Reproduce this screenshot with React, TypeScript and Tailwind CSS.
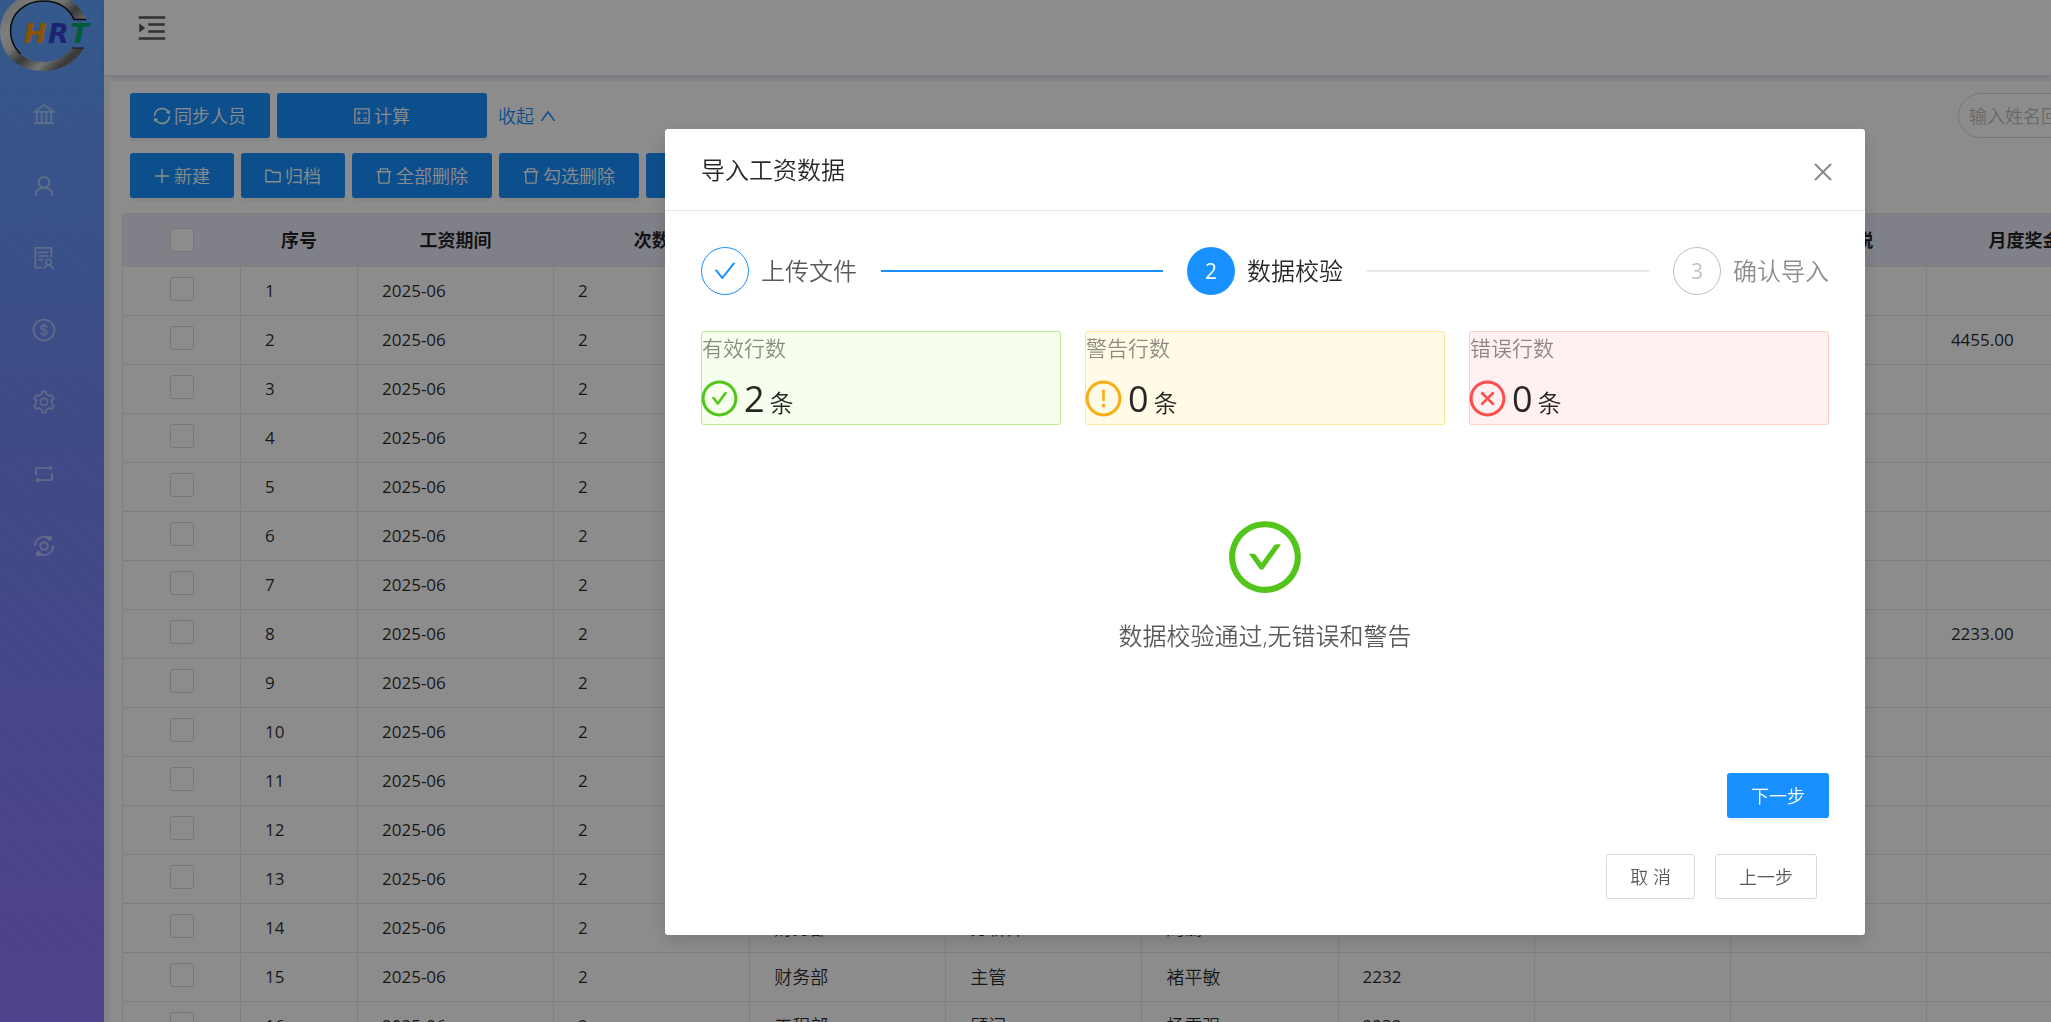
import {
  AiOutlineBank,
  AiOutlineCalculator,
  AiOutlineCheck,
  AiOutlineCheckCircle,
  AiOutlineClose,
  AiOutlineCloseCircle,
  AiOutlineDelete,
  AiOutlineDollar,
  AiOutlineExclamationCircle,
  AiOutlineFolder,
  AiOutlineMenuUnfold,
  AiOutlinePlus,
  AiOutlineRetweet,
  AiOutlineSetting,
  AiOutlineSolution,
  AiOutlineSync,
  AiOutlineUp,
  AiOutlineUser,
} from 'react-icons/ai';
import type { ReactNode } from 'react';

type Row = {
  id: number;
  dept?: string;
  post?: string;
  name?: string;
  code?: string;
  bonus?: string;
};

const details: Record<number, Omit<Row, 'id'>> = {
  2: { bonus: '4455.00' },
  8: { bonus: '2233.00' },
  14: { dept: '财务部', post: '分析师', name: '周丽' },
  15: { dept: '财务部', post: '主管', name: '褚平敏', code: '2232' },
  16: { dept: '工程部', post: '顾问', name: '杨雪强', code: '2232' },
};

const rows: Row[] = Array.from({ length: 16 }, (_, i) => ({ id: i + 1, ...details[i + 1] }));

const headers = ['序号', '工资期间', '次数', '', '', '', '', '', '个人所得税', '月度奖金'];

function OrbitIcon() {
  return (
    <svg viewBox="0 0 24 24" className="w-6 h-6" fill="none" stroke="currentColor" strokeWidth="2">
      <circle cx="12" cy="12" r="3.8" />
      <path d="M2.9 12A9.1 9.1 0 0 1 16 3.8" />
      <path d="M21.1 12A9.1 9.1 0 0 1 8 20.2" />
      <circle cx="17.4" cy="4.6" r="2.4" fill="currentColor" stroke="none" />
      <circle cx="6.6" cy="19.4" r="2.4" fill="currentColor" stroke="none" />
      <path d="M17 2.9h3M7 21.1H4" strokeWidth="1.4" />
    </svg>
  );
}

function Logo() {
  return (
    <svg viewBox="0 0 104 75" className="w-[104px] h-[75px] block">
      <defs>
        <linearGradient id="ring" x1="0" y1="0" x2="1" y2="1">
          <stop offset="0" stopColor="#b5b5b5" />
          <stop offset="0.3" stopColor="#e6e6e6" />
          <stop offset="0.42" stopColor="#d0d0d0" />
          <stop offset="0.55" stopColor="#6a6a6a" />
          <stop offset="0.7" stopColor="#d6d6d6" />
          <stop offset="0.82" stopColor="#6a6a6a" />
          <stop offset="1" stopColor="#8a8a8a" />
        </linearGradient>
      </defs>
      <path
        d="M86 19C79 3 63-8 43-8 19-8 0 9 0 32s19 39 43 39c18 0 33-9 41-23H72c-6 8-16 14-28 14C24 62 10 49 10 31S24 1 44 1c14 0 25 7 30 18z"
        fill="url(#ring)"
      />
      <path d="M86 19.500H74C69 8 58 1 44 1 24 1 10.500 14 10.500 31c0 9 4 17 10 23" fill="none" stroke="#161616" strokeWidth="1.500" />
      <path d="M72 48h12" stroke="#2a2a2a" strokeWidth="1" />
      <g fontFamily="DejaVu Sans" fontWeight="700" fontStyle="italic" fontSize="27">
        <text x="24" y="43" fill="#ff9a00">H</text>
        <text x="48" y="43" fill="#3340d0">R</text>
        <text x="70" y="43" fill="#00a862">T</text>
      </g>
    </svg>
  );
}

const menu = [
  { label: '组织', icon: <AiOutlineBank size={26} /> },
  { label: '人员', icon: <AiOutlineUser size={26} /> },
  { label: '档案', icon: <AiOutlineSolution size={26} /> },
  { label: '薪资', icon: <AiOutlineDollar size={26} /> },
  { label: '设置', icon: <AiOutlineSetting size={26} /> },
  { label: '流程', icon: <AiOutlineRetweet size={24} /> },
  { label: '监控', icon: <OrbitIcon /> },
];

function Sidebar() {
  return (
    <aside className="w-[104px] shrink-0 bg-[repeating-linear-gradient(45deg,transparent_0_17px,rgba(255,255,255,0.03)_17px_18px),linear-gradient(#5fa3ff,#7189f3_40%,#9378ff)]">
      <Logo />
      <nav className="mt-[3px] flex flex-col w-[88px]">
        {menu.map((item) => (
          <a
            key={item.label}
            href="#"
            aria-label={item.label}
            className="h-[72px] flex items-center justify-center text-white/45"
          >
            {item.icon}
          </a>
        ))}
      </nav>
    </aside>
  );
}

function ToolButton({ icon, children, className = '' }: { icon: ReactNode; children: ReactNode; className?: string }) {
  return (
    <button
      type="button"
      className={`h-[45px] pl-[22px] pr-6 shrink-0 flex items-center justify-center gap-[2px] rounded-[3px] bg-[#1890ff] text-white shadow-[0_3px_0_rgba(0,0,0,0.045)] ${className}`}
    >
      {icon}
      {children}
    </button>
  );
}

function Checkbox({ label }: { label: string }) {
  return (
    <input
      type="checkbox"
      aria-label={label}
      className="appearance-none block mx-auto w-6 h-6 rounded-[3px] border border-[#d9d9d9] bg-white"
    />
  );
}

function SalaryTable() {
  const cell = 'h-[49px] border-r border-b border-[#e8e8e8] px-6 text-left';
  const numCell = `${cell} font-normal text-[17px]`;

  return (
    <table className="table-fixed w-[2001px] border-separate border-spacing-0 border-l border-t border-[#e8e8e8] rounded-tl-[4px] text-black/85">
      <colgroup>
        <col className="w-[118px]" />
        <col className="w-[117px]" />
      </colgroup>
      <thead className="bg-[#e9ecf7] font-bold">
        <tr>
          <th className="h-[53px] border-r border-b border-[#e8e8e8]">
            <Checkbox label="全选" />
          </th>
          {headers.map((h, i) => (
            <th key={i} className="border-r border-b border-[#e8e8e8] text-center">
              {h}
            </th>
          ))}
        </tr>
      </thead>
      <tbody>
        {rows.map((r) => (
          <tr key={r.id}>
            <td className="border-r border-b border-[#e8e8e8] pb-1">
              <Checkbox label={`选择第${r.id}行`} />
            </td>
            <td className={numCell}>{r.id}</td>
            <td className={numCell}>2025-06</td>
            <td className={numCell}>2</td>
            <td className={cell}>{r.dept}</td>
            <td className={cell}>{r.post}</td>
            <td className={cell}>{r.name}</td>
            <td className={numCell}>{r.code}</td>
            <td className={cell}></td>
            <td className={cell}></td>
            <td className={numCell}>{r.bonus}</td>
          </tr>
        ))}
      </tbody>
    </table>
  );
}

function Steps() {
  const circle = 'w-12 h-12 mr-3 shrink-0 rounded-full flex items-center justify-center font-normal text-[21px]';

  return (
    <ol className="flex items-center text-2xl leading-[48px]">
      <li className="flex-1 flex items-center text-black/65">
        <span className={`${circle} border border-[#1890ff] text-[#1890ff]`}>
          <AiOutlineCheck size={26} />
        </span>
        上传文件
        <span className="flex-1 h-[2px] mx-6 bg-[#1890ff]" />
      </li>
      <li className="flex-1 flex items-center text-black/85">
        <span className={`${circle} bg-[#1890ff] text-white`}>2</span>
        数据校验
        <span className="flex-1 h-[2px] mx-6 bg-[#e8e8e8]" />
      </li>
      <li className="flex items-center text-black/45">
        <span className={`${circle} border border-black/25 text-black/25`}>3</span>
        确认导入
      </li>
    </ol>
  );
}

const stats = [
  { label: '有效行数', value: 2, icon: <AiOutlineCheckCircle size={41} />, box: 'bg-[#f6ffed] border-[#b7eb8f]', tone: 'text-[#52c41a]' },
  { label: '警告行数', value: 0, icon: <AiOutlineExclamationCircle size={41} />, box: 'bg-[#fffbe6] border-[#ffe58f]', tone: 'text-[#faad14]' },
  { label: '错误行数', value: 0, icon: <AiOutlineCloseCircle size={41} />, box: 'bg-[#fff1f0] border-[#ffccc7]', tone: 'text-[#ff4d4f]' },
];

function ImportModal() {
  const plain = 'h-[45px] px-[23px] rounded-[3px] border border-[#d9d9d9] bg-white text-black/65 shadow-[0_3px_0_rgba(0,0,0,0.015)]';

  return (
    <div className="fixed inset-0 bg-black/45 flex items-start justify-end pt-[129px] pr-[186px]">
      <section
        role="dialog"
        aria-labelledby="import-title"
        className="w-[1200px] bg-white rounded-[3px] shadow-[0_6px_18px_rgba(0,0,0,0.15)]"
      >
        <header className="h-[82px] pl-9 pr-[29px] flex items-center justify-between border-b border-[#e8e8e8]">
          <h2 id="import-title" className="text-2xl text-black/85">导入工资数据</h2>
          <button type="button" aria-label="关闭" className="pt-1 text-black/45">
            <AiOutlineClose size={26} />
          </button>
        </header>
        <div className="p-9">
          <Steps />
          <div className="mt-9 grid grid-cols-3 gap-6">
            {stats.map((s) => (
              <div key={s.label} className={`h-[94px] border rounded-[3px] ${s.box}`}>
                <div className="text-[21px] leading-8 text-black/45">{s.label}</div>
                <div className="mt-[11px] flex items-start text-black/85">
                  <span className={`pt-[3px] -ml-[3px] mr-1 ${s.tone}`}>{s.icon}</span>
                  <div className="flex items-baseline gap-[5px] leading-[48px]">
                    <span className="text-4xl leading-[48px] font-normal">{s.value}</span>
                    <span className="text-2xl leading-[48px]">条</span>
                  </div>
                </div>
              </div>
            ))}
          </div>
          <div className="mt-[91px] flex flex-col items-center">
            <AiOutlineCheckCircle size={82} className="text-[#52c41a]" />
            <p className="mt-5 text-2xl leading-9 text-black/65">数据校验通过,无错误和警告</p>
          </div>
          <div className="mt-[119px] flex justify-end">
            <button type="button" className="h-[45px] px-6 rounded-[3px] bg-[#1890ff] text-white shadow-[0_3px_0_rgba(0,0,0,0.045)]">
              下一步
            </button>
          </div>
          <div className="mt-9 pr-3 flex justify-end gap-5">
            <button type="button" className={plain}>取 消</button>
            <button type="button" className={plain}>上一步</button>
          </div>
        </div>
      </section>
    </div>
  );
}

export default function App() {
  return (
    <div className="h-screen overflow-hidden flex bg-[#eef0f8] font-['Open_Sans','Noto_Sans_CJK_SC',sans-serif] font-[350] text-lg">
      <Sidebar />
      <div className="flex-1 min-w-0 flex flex-col">
        <header className="h-[75px] shrink-0 bg-white px-[31px] pb-5 flex items-center shadow-[0_1px_4px_rgba(0,21,41,0.08)]">
          <button type="button" aria-label="展开菜单" className="text-black/65">
            <AiOutlineMenuUnfold size={34} />
          </button>
        </header>
        <main className="ml-[6px] mt-[6px] flex-1 min-h-0 overflow-hidden bg-white rounded-tl-[3px] pt-3 pl-3">
          <div className="pl-2 flex justify-between">
            <div className="flex flex-col gap-[15px]">
              <div className="flex items-center gap-[7px]">
                <ToolButton icon={<AiOutlineSync size={20} />}>同步人员</ToolButton>
                <ToolButton icon={<AiOutlineCalculator size={20} />} className="w-[210px]">计算</ToolButton>
                <a href="#" className="ml-1 flex items-center gap-1 text-[#1890ff]">
                  收起 <AiOutlineUp size={20} />
                </a>
              </div>
              <div className="flex gap-[7px]">
                <ToolButton icon={<AiOutlinePlus size={20} />}>新建</ToolButton>
                <ToolButton icon={<AiOutlineFolder size={20} />}>归档</ToolButton>
                <ToolButton icon={<AiOutlineDelete size={20} />}>全部删除</ToolButton>
                <ToolButton icon={<AiOutlineDelete size={20} />}>勾选删除</ToolButton>
                <button type="button" aria-label="导入" className="w-[104px] h-[45px] rounded-[3px] bg-[#1890ff]" />
              </div>
            </div>
            <div className="w-[93px] shrink-0">
              <input
                type="text"
                aria-label="搜索"
                placeholder="输入姓名回车"
                className="w-60 h-[45px] px-[10px] rounded-full border border-[#d9d9d9] placeholder:text-[#bfbfbf]"
              />
            </div>
          </div>
          <div className="mt-[15px]">
            <SalaryTable />
          </div>
        </main>
      </div>
      <ImportModal />
    </div>
  );
}
